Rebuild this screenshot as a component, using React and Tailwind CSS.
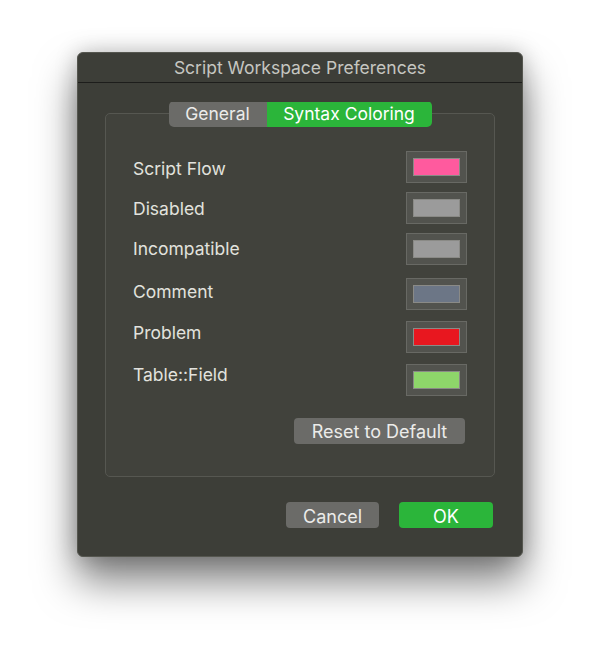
const rows = [
  { label: 'Script Flow', color: 'bg-[#ff5a9e]', mt: 'mt-0', lt: 'mt-[5px]' },
  { label: 'Disabled', color: 'bg-[#9b9b9b]', mt: 'mt-[9px]', lt: 'mt-[4px]' },
  { label: 'Incompatible', color: 'bg-[#9b9b9b]', mt: 'mt-[9px]', lt: 'mt-[3px]' },
  { label: 'Comment', color: 'bg-[#6c7686]', mt: 'mt-[13px]', lt: 'mt-[1px]' },
  { label: 'Problem', color: 'bg-[#e8171f]', mt: 'mt-[11px]', lt: '-mt-[1px]' },
  { label: 'Table::Field', color: 'bg-[#8ed66a]', mt: 'mt-[11px]', lt: '-mt-[2px]' },
];

const Swatch = ({ color }) => (
  <div className="w-[61px] h-[32px] bg-[#52534e] border border-[#686964] flex items-center justify-center">
    <div className={`w-[47px] h-[18px] border border-[#8a8a86] ${color}`}></div>
  </div>
);

const App = () => {
  return (
    <div
      className="w-[600px] h-[660px] bg-white pt-[52px] pl-[77px]"
      style={{ fontFamily: 'Inter, "Liberation Sans", Arial, sans-serif' }}
    >
      <div className="w-[446px] h-[505px] bg-[#3d3e38] rounded-[6px] border border-[#55564f] shadow-[0_24px_40px_rgba(0,0,0,0.5),0_0_22px_rgba(0,0,0,0.22)] flex flex-col">
        <div className="h-[30px] flex items-center justify-center border-b border-[#1d1d1b] text-[17.5px] text-[#c6c6c1] pt-[2px]">
          Script Workspace Preferences
        </div>

        <div className="flex justify-center pt-[18px]">
          <div className="relative z-10 flex h-[26px] rounded-[5px] overflow-hidden text-[17.5px] pt-[1px]">
            <div className="w-[98px] bg-[#6b6b68] text-[#ececea] flex items-center justify-center">General</div>
            <div className="w-[165px] bg-[#2bb53a] text-white flex items-center justify-center">Syntax Coloring</div>
          </div>
        </div>

        <div className="mx-[27px] -mt-[14px] h-[364px] rounded-[5px] border border-[#565751] bg-[#41423c] px-[27px] pt-[37px] flex flex-col">
          {rows.map((row) => (
            <div key={row.label} className={`flex items-start justify-between h-[32px] ${row.mt}`}>
              <span className={`text-[17.5px] leading-[26px] text-[#e2e2de] ${row.lt}`}>{row.label}</span>
              <Swatch color={row.color} />
            </div>
          ))}
          <div className="flex justify-end mt-[22px] pr-[2px]">
            <div className="w-[171px] h-[26px] rounded-[4px] bg-[#6b6b68] text-[#ececea] text-[18px] pt-[1px] flex items-center justify-center">
              Reset to Default
            </div>
          </div>
        </div>

        <div className="flex justify-end gap-[20px] mt-[25px] pr-[29px]">
          <div className="w-[93px] h-[26px] rounded-[4px] bg-[#6b6b68] text-[#ececea] text-[18px] pt-[2px] flex items-center justify-center">
            Cancel
          </div>
          <div className="w-[94px] h-[26px] rounded-[4px] bg-[#2bb53a] text-white text-[18px] pt-[2px] flex items-center justify-center">
            OK
          </div>
        </div>
      </div>
    </div>
  );
};

export default App;
